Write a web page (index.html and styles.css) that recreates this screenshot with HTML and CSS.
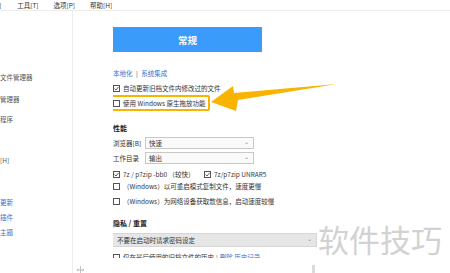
FILE: index.html
```html
<!DOCTYPE html>
<html lang="zh-CN">

<head>
    <meta charset="UTF-8">
    <title>选项</title>
    <link rel="stylesheet" href="styles.css">
</head>

<body>
    <div class="menubar">
        <span class="menu-item cut">]</span>
        <span class="menu-item">工具[T]</span>
        <span class="menu-item">选项[P]</span>
        <span class="menu-item">帮助[H]</span>
    </div>

    <div class="main">
        <div class="sidebar">
            <div class="side-item first">文件管理器</div>
            <div class="side-item gap-12">管理器</div>
            <div class="side-item gap-10">程序</div>
            <div class="side-item gap-31">[H]</div>
            <div class="side-item link gap-32">更新</div>
            <div class="side-item link gap-5">插件</div>
            <div class="side-item link gap-5">主题</div>
        </div>

        <div class="content">
            <div class="scroll">
                <div class="tab-button">常规</div>

                <div class="row links">
                    <span class="link">本地化</span>
                    <span class="sep">|</span>
                    <span class="link">系统集成</span>
                </div>

                <div class="row check-row first-check">
                    <svg class="box" viewBox="0 0 7 7"><rect x="0.5" y="0.5" width="6" height="6" fill="#fff" stroke="#555"/><path d="M1.5 3.6 L3 5 L5.6 1.8" fill="none" stroke="#333" stroke-width="0.8"/></svg>
                    <span>自动更新旧档文件内修改过的文件</span>
                </div>

                <div class="highlight">
                    <div class="row check-row">
                        <svg class="box" viewBox="0 0 7 7"><rect x="0.5" y="0.5" width="6" height="6" fill="#fff" stroke="#555"/></svg>
                        <span>使用 Windows 原生拖放功能</span>
                    </div>
                </div>

                <div class="row heading perf">性能</div>

                <div class="field first-field">
                    <span class="field-label">浏览器[B]</span>
                    <div class="select">
                        <span>快速</span>
                        <span class="chevron">⌄</span>
                    </div>
                </div>

                <div class="field second-field">
                    <span class="field-label">工作目录</span>
                    <div class="select">
                        <span>输出</span>
                        <span class="chevron">⌄</span>
                    </div>
                </div>

                <div class="row check-pair">
                    <div class="check-row">
                        <svg class="box" viewBox="0 0 7 7"><rect x="0.5" y="0.5" width="6" height="6" fill="#fff" stroke="#555"/><path d="M1.5 3.6 L3 5 L5.6 1.8" fill="none" stroke="#333" stroke-width="0.8"/></svg>
                        <span>7z / p7zip -bb0 （较快）</span>
                    </div>
                    <div class="check-row">
                        <svg class="box" viewBox="0 0 7 7"><rect x="0.5" y="0.5" width="6" height="6" fill="#fff" stroke="#555"/><path d="M1.5 3.6 L3 5 L5.6 1.8" fill="none" stroke="#333" stroke-width="0.8"/></svg>
                        <span>7z/p7zip UNRAR5</span>
                    </div>
                </div>

                <div class="row check-row win-one">
                    <svg class="box" viewBox="0 0 7 7"><rect x="0.5" y="0.5" width="6" height="6" fill="#fff" stroke="#555"/></svg>
                    <span>（Windows）以可重启模式复制文件，速度更慢</span>
                </div>

                <div class="row check-row win-two">
                    <svg class="box" viewBox="0 0 7 7"><rect x="0.5" y="0.5" width="6" height="6" fill="#fff" stroke="#555"/></svg>
                    <span>（Windows）为网络设备获取散信息，启动速度较慢</span>
                </div>

                <div class="row heading privacy">隐私 / 重置</div>

                <div class="select wide">
                    <span>不要在启动时请求密码设定</span>
                    <span class="chevron">⌄</span>
                </div>

                <div class="row check-row last-row">
                    <svg class="box" viewBox="0 0 7 7"><rect x="0.5" y="0.5" width="6" height="6" fill="#fff" stroke="#555"/></svg>
                    <span>仅在最后使用的旧档文件的历史</span>
                    <span class="sep">|</span>
                    <span class="link">删除 历史记录</span>
                </div>
            </div>
        </div>
    </div>

    <!-- annotation arrow pointing at the highlighted option -->
    <svg class="arrow" width="450" height="273" viewBox="0 0 450 273">
        <polygon points="211,102 233,86 234,93 337,84 238,100 236,111" fill="#f8b400"/>
    </svg>

    <div class="watermark">软件技巧</div>

    <div class="scroll-thumb"></div>

    <svg class="resize-icon" width="9" height="7" viewBox="0 0 9 7">
        <path d="M4.5 0 V7 M1 4 H8 M1 4 L2.5 3 M1 4 L2.5 5 M8 4 L6.5 3 M8 4 L6.5 5" stroke="#aaa" stroke-width="0.7" fill="none"/>
    </svg>
</body>

</html>
```

FILE: styles.css
```css
body {
    margin: 0;
    width: 450px;
    height: 273px;
    overflow: hidden;
    position: relative;
    background-color: #fff;
    font-family: "Noto Sans CJK SC", "Noto Sans", sans-serif;
    font-size: 6.5px;
    color: #333;
}

.menubar {
    height: 10px;
    border-bottom: 1px solid #ececec;
    display: flex;
    align-items: center;
    line-height: 10px;
}

.menu-item {
    margin-right: 15px;
    color: #333;
}

.menu-item.cut {
    margin-left: -1px;
    margin-right: 16px;
}

.main {
    display: flex;
    height: 262px;
}

.sidebar {
    width: 72px;
    border-right: 1px solid #ededed;
    padding-top: 61px;
    overflow: hidden;
    flex-shrink: 0;
}

.side-item {
    height: 10px;
    line-height: 10px;
    color: #555;
    white-space: nowrap;
}

.side-item.link {
    color: #3a6ec8;
}

.gap-5 {
    margin-top: 5px;
}

.gap-10 {
    margin-top: 10px;
}

.gap-12 {
    margin-top: 12px;
}

.gap-31 {
    margin-top: 31px;
}

.gap-32 {
    margin-top: 32px;
}

.content {
    flex: 1;
    padding-left: 40px;
}

.scroll {
    height: 247px;
    overflow: hidden;
    display: flex;
    flex-direction: column;
    align-items: flex-start;
}

.tab-button {
    margin-top: 16px;
    width: 149px;
    height: 25px;
    background-color: #3a9bfb;
    color: #fff;
    font-size: 9.5px;
    font-weight: bold;
    display: flex;
    justify-content: center;
    align-items: center;
    flex-shrink: 0;
}

.row {
    height: 10px;
    line-height: 10px;
    white-space: nowrap;
    flex-shrink: 0;
}

.links {
    margin-top: 16px;
}

.link {
    color: #3a6ec8;
}

.sep {
    color: #555;
    margin: 0 2px;
}

.check-row {
    display: flex;
    align-items: center;
    white-space: nowrap;
}

.box {
    width: 7px;
    height: 7px;
    margin-right: 3px;
    flex-shrink: 0;
}

.first-check {
    margin-top: 5px;
}

.highlight {
    margin-top: 2px;
    margin-left: -5px;
    width: 95px;
    height: 12px;
    padding: 0 0 0 3px;
    border: 2px solid #f8b400;
    border-radius: 2px;
    display: flex;
    align-items: center;
    flex-shrink: 0;
}

.heading {
    font-weight: bold;
    color: #222;
    font-size: 7px;
}

.perf {
    margin-top: 12px;
}

.field {
    display: flex;
    align-items: center;
    height: 12px;
    flex-shrink: 0;
}

.first-field {
    margin-top: 4px;
}

.second-field {
    margin-top: 3px;
}

.field-label {
    width: 32px;
    white-space: nowrap;
}

.select {
    width: 100px;
    height: 10px;
    border: 1px solid #c8c8c8;
    background-color: #fafafa;
    display: flex;
    align-items: center;
    justify-content: space-between;
    padding: 0 4px 0 3px;
    box-sizing: content-box;
    line-height: 10px;
    flex-shrink: 0;
}

.chevron {
    color: #888;
    font-size: 6px;
    line-height: 6px;
    margin-top: -3px;
}

.check-pair {
    margin-top: 5px;
    display: flex;
}

.check-pair .check-row:first-child {
    width: 91px;
}

.win-one {
    margin-top: 2px;
}

.win-two {
    margin-top: 5px;
}

.privacy {
    margin-top: 12px;
}

.select.wide {
    margin-top: 5px;
    margin-left: -1px;
    width: 195px;
    height: 12px;
    background-color: #e6e6e6;
    border-color: #d6d6d6;
    padding-left: 4px;
}

.last-row {
    margin-top: 5px;
}

.arrow {
    position: absolute;
    left: 0;
    top: 0;
    pointer-events: none;
}

.watermark {
    position: absolute;
    left: 318px;
    top: 221px;
    font-size: 31px;
    line-height: 36px;
    color: #d2d2d2;
    white-space: nowrap;
}

.scroll-thumb {
    position: absolute;
    left: 312px;
    top: 265px;
    width: 3px;
    height: 8px;
    background-color: #dcdcdc;
}

.resize-icon {
    position: absolute;
    left: 76px;
    top: 266px;
}
```
